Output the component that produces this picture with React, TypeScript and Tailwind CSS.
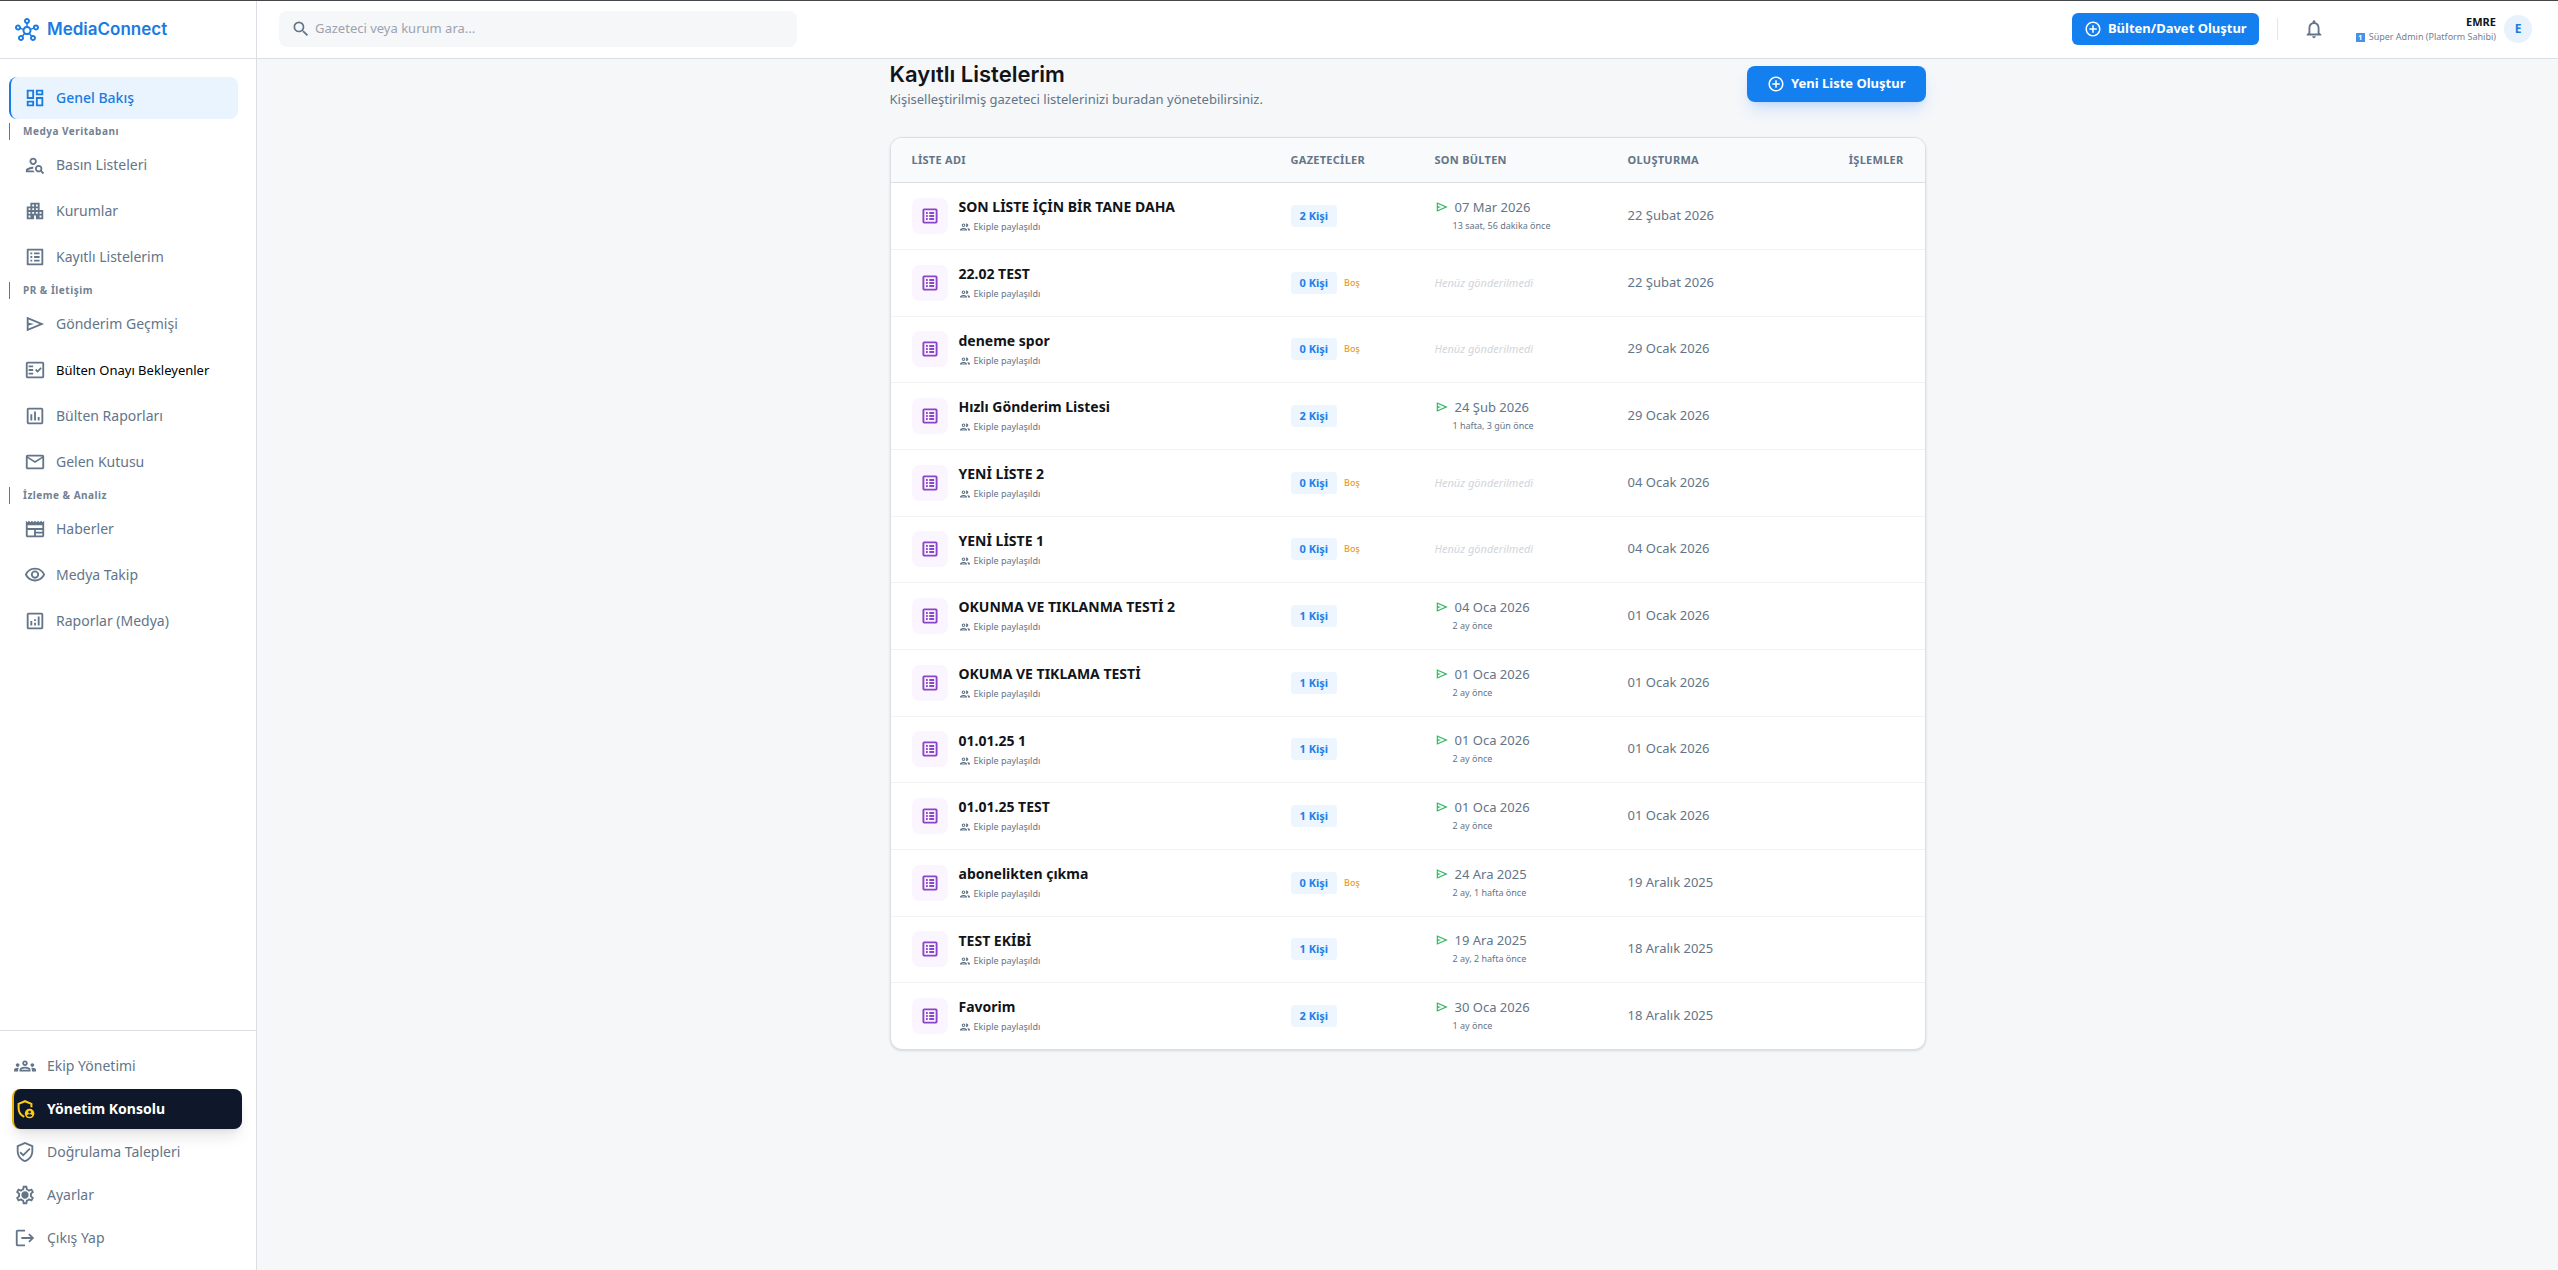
import type { ReactNode } from "react";
import type { IconType } from "react-icons";
import {
    MdAddCircleOutline,
    MdLogout,
    MdOutlineAnalytics,
    MdOutlineApartment,
    MdOutlineDashboard,
    MdOutlineFactCheck,
    MdOutlineGroup,
    MdOutlineGroups,
    MdOutlineHub,
    MdOutlineInsertChart,
    MdOutlineListAlt,
    MdOutlineMail,
    MdOutlineNewspaper,
    MdOutlineNotifications,
    MdOutlinePersonSearch,
    MdOutlineSettings,
    MdOutlineVerifiedUser,
    MdOutlineVisibility,
    MdSearch,
} from "react-icons/md";

type IconProps = { className?: string };

type NavItem = {
    label: string;
    icon: IconType | ((props: IconProps) => ReactNode);
    active?: boolean;
    strong?: boolean;
};

type ListRow = {
    name: string;
    count: number;
    sent?: string;
    ago?: string;
    created: string;
};

function SendIcon({ className }: IconProps) {
    return (
        <svg viewBox="0 -960 960 960" fill="currentColor" className={className} aria-hidden="true">
            <path d="M120-160v-640l760 320-760 320Zm80-120 474-200-474-200v140l240 60-240 60v140Z" />
        </svg>
    );
}

// shield with a solid person badge, the badge is cut out in the button's navy
function ConsoleIcon({ className }: IconProps) {
    return (
        <svg viewBox="0 0 24 24" fill="none" className={className} aria-hidden="true">
            <path
                d="M19 10V6.4l-7-2.9-7 2.9V11c0 4.4 2.6 8 6.2 9.6"
                stroke="currentColor"
                strokeWidth="2.2"
            />
            <circle cx="17" cy="17" r="5.2" fill="currentColor" />
            <circle cx="17" cy="15.4" r="1.5" fill="#0f172a" />
            <path d="M14 19.1c.6-1 1.700-1.500 3-1.500s2.400.5 3 1.500c-.7.900-1.800 1.400-3 1.400s-2.300-.5-3-1.400Z" fill="#0f172a" />
        </svg>
    );
}

function SettingsIcon({ className }: IconProps) {
    return (
        <svg viewBox="0 0 24 24" fill="currentColor" className={className} aria-hidden="true">
            <MdOutlineSettings size={24} />
            <circle cx="12" cy="12" r="3" />
        </svg>
    );
}

// heavier list glyph used in the row tiles
function ListTileIcon({ className }: IconProps) {
    return (
        <svg viewBox="0 0 24 24" fill="none" stroke="currentColor" strokeWidth="2.5" className={className} aria-hidden="true">
            <rect x="3.200" y="3.200" width="17.600" height="17.600" rx="1" />
            <path d="M6.700 8h2.300M6.700 12h2.300M6.700 16h2.300M11 8h6.500M11 12h6.500M11 16h6.500" />
        </svg>
    );
}

const SECTIONS: { title?: string; items: NavItem[] }[] = [
    { items: [{ label: "Genel Bakış", icon: MdOutlineDashboard, active: true }] },
    {
        title: "Medya Veritabanı",
        items: [
            { label: "Basın Listeleri", icon: MdOutlinePersonSearch },
            { label: "Kurumlar", icon: MdOutlineApartment },
            { label: "Kayıtlı Listelerim", icon: MdOutlineListAlt },
        ],
    },
    {
        title: "PR & İletişim",
        items: [
            { label: "Gönderim Geçmişi", icon: SendIcon },
            { label: "Bülten Onayı Bekleyenler", icon: MdOutlineFactCheck, strong: true },
            { label: "Bülten Raporları", icon: MdOutlineInsertChart },
            { label: "Gelen Kutusu", icon: MdOutlineMail },
        ],
    },
    {
        title: "İzleme & Analiz",
        items: [
            { label: "Haberler", icon: MdOutlineNewspaper },
            { label: "Medya Takip", icon: MdOutlineVisibility },
            { label: "Raporlar (Medya)", icon: MdOutlineAnalytics },
        ],
    },
];

const FOOTER_ITEMS: NavItem[] = [
    { label: "Ekip Yönetimi", icon: MdOutlineGroups },
    { label: "Yönetim Konsolu", icon: ConsoleIcon, active: true },
    { label: "Doğrulama Talepleri", icon: MdOutlineVerifiedUser },
    { label: "Ayarlar", icon: SettingsIcon },
    { label: "Çıkış Yap", icon: MdLogout },
];

const ROWS: ListRow[] = [
    { name: "SON LİSTE İÇİN BİR TANE DAHA", count: 2, sent: "07 Mar 2026", ago: "13 saat, 56 dakika önce", created: "22 Şubat 2026" },
    { name: "22.02 TEST", count: 0, created: "22 Şubat 2026" },
    { name: "deneme spor", count: 0, created: "29 Ocak 2026" },
    { name: "Hızlı Gönderim Listesi", count: 2, sent: "24 Şub 2026", ago: "1 hafta, 3 gün önce", created: "29 Ocak 2026" },
    { name: "YENİ LİSTE 2", count: 0, created: "04 Ocak 2026" },
    { name: "YENİ LİSTE 1", count: 0, created: "04 Ocak 2026" },
    { name: "OKUNMA VE TIKLANMA TESTİ 2", count: 1, sent: "04 Oca 2026", ago: "2 ay önce", created: "01 Ocak 2026" },
    { name: "OKUMA VE TIKLAMA TESTİ", count: 1, sent: "01 Oca 2026", ago: "2 ay önce", created: "01 Ocak 2026" },
    { name: "01.01.25 1", count: 1, sent: "01 Oca 2026", ago: "2 ay önce", created: "01 Ocak 2026" },
    { name: "01.01.25 TEST", count: 1, sent: "01 Oca 2026", ago: "2 ay önce", created: "01 Ocak 2026" },
    { name: "abonelikten çıkma", count: 0, sent: "24 Ara 2025", ago: "2 ay, 1 hafta önce", created: "19 Aralık 2025" },
    { name: "TEST EKİBİ", count: 1, sent: "19 Ara 2025", ago: "2 ay, 2 hafta önce", created: "18 Aralık 2025" },
    { name: "Favorim", count: 2, sent: "30 Oca 2026", ago: "1 ay önce", created: "18 Aralık 2025" },
];

function Sidebar() {
    return (
        <aside className="flex w-[257px] shrink-0 flex-col border-r border-[#dbdfe4] bg-white">
            <a href="#" className="flex h-[58px] shrink-0 items-center gap-2 border-b border-[#dbdfe4] px-[15px] text-[#1a7be0]">
                <MdOutlineHub className="size-6" />
                <span className="font-['Inter',sans-serif] text-[17px] font-semibold">MediaConnect</span>
            </a>

            <nav className="flex flex-1 flex-col gap-1 pt-[18px] pr-[18px] pl-[9px]">
                {SECTIONS.map((section, i) => (
                    <div key={i} className="flex flex-col gap-1">
                        {section.title && (
                            <h3 className="h-[17px] border-l border-[#3b82c4] pl-[13px] text-[10px] leading-4 font-bold tracking-wider text-[#738192]">
                                {section.title}
                            </h3>
                        )}
                        {section.items.map((item) => (
                            <a
                                key={item.label}
                                href="#"
                                className={
                                    item.active
                                        ? "flex h-[42px] items-center gap-[10px] rounded-lg border-l-2 border-[#1a7be0] bg-[#eaf4fe] pl-[13px] text-sm font-medium text-[#1a7be0]"
                                        : "flex h-[42px] items-center gap-[10px] rounded-lg border-l-2 border-transparent pl-[13px] text-sm text-[#637588]"
                                }
                            >
                                <item.icon className="size-[22px] shrink-0" />
                                <span className={item.strong ? "text-[13px] text-black" : ""}>{item.label}</span>
                            </a>
                        ))}
                    </div>
                ))}
            </nav>

            <div className="flex flex-col gap-[3px] border-t border-[#dbdfe4] pt-[15px] pr-[14px] pb-3 pl-3">
                {FOOTER_ITEMS.map((item) => (
                    <a
                        key={item.label}
                        href="#"
                        className={
                            item.active
                                ? "flex h-10 items-center gap-[11px] rounded-lg border-l-2 border-[#eab308] bg-[#0f172a] text-sm font-bold text-white shadow-lg"
                                : "flex h-10 items-center gap-[11px] border-l-2 border-transparent text-sm text-[#637588]"
                        }
                    >
                        <item.icon className={item.active ? "size-[22px] text-[#facc15]" : "size-[22px]"} />
                        {item.label}
                    </a>
                ))}
            </div>
        </aside>
    );
}

function Topbar() {
    return (
        <header className="flex h-[58px] shrink-0 items-center border-b border-[#dbdfe4] bg-white pr-[26px] pb-px pl-[22px]">
            <label className="flex h-9 w-[518px] items-center gap-1 rounded-lg bg-[#f5f7f9] px-3 text-[#637588]">
                <MdSearch className="size-5 shrink-0" aria-label="Ara" />
                <input
                    type="search"
                    placeholder="Gazeteci veya kurum ara..."
                    className="w-full bg-transparent text-[13px] outline-none placeholder:text-[#9ca3af]"
                />
            </label>

            <div className="ml-auto flex items-center">
                <button className="flex h-8 items-center gap-[6px] rounded-md bg-[#147fee] px-3 text-[13px] font-bold text-white">
                    <MdAddCircleOutline className="size-[18px]" />
                    Bülten/Davet Oluştur
                </button>
                <span className="mx-[18px] h-[22px] w-px bg-[#e3e6ea]" />
                <button className="flex w-9 justify-center text-[#637588]" aria-label="Bildirimler">
                    <MdOutlineNotifications className="size-[22px]" />
                </button>
                <div className="ml-6 flex flex-col items-end">
                    <span className="text-[11px] leading-4 font-bold text-[#111418]">EMRE</span>
                    <span className="flex items-center gap-1 text-[9px] leading-[14px] text-[#738192]">
                        <span className="flex size-[9px] items-center justify-center bg-[#4a90e8] text-[7px] leading-none font-bold text-white">
                            1
                        </span>
                        Süper Admin (Platform Sahibi)
                    </span>
                </div>
                <span className="ml-2 flex size-7 items-center justify-center rounded-full bg-[#e7f2fd] text-xs font-bold text-[#1a7be0]">
                    E
                </span>
            </div>
        </header>
    );
}

function ListTable() {
    return (
        <div className="overflow-hidden rounded-xl border border-[#dbdfe4] bg-white shadow-sm">
            <table className="w-full table-fixed text-left">
                <colgroup>
                    <col className="w-[379px]" />
                    <col className="w-[144px]" />
                    <col className="w-[193px]" />
                    <col />
                    <col />
                </colgroup>
                <thead className="bg-[#f9fafc] text-[11px] tracking-wide text-[#637588]">
                    <tr className="h-11 border-b border-[#dbdfe4]">
                        <th className="px-[21px] font-bold">LİSTE ADI</th>
                        <th className="px-[21px] font-bold">GAZETECİLER</th>
                        <th className="px-[21px] font-bold">SON BÜLTEN</th>
                        <th className="px-[21px] font-bold">OLUŞTURMA</th>
                        <th className="px-[21px] text-right font-bold">İŞLEMLER</th>
                    </tr>
                </thead>
                <tbody className="text-[13px] text-[#637588]">
                    {ROWS.map((row) => (
                        <tr key={row.name} className="h-[67px] border-b border-[#f0f2f4] last:border-b-0 nth-[3n]:h-[66px]">
                            <td className="px-[21px]">
                                <div className="flex items-center gap-[11px]">
                                    <span className="flex size-9 shrink-0 items-center justify-center rounded-lg bg-[#faf5ff] text-[#8b45c9]">
                                        <ListTileIcon className="size-[18px]" />
                                    </span>
                                    <div>
                                        <p className="text-sm leading-5 font-bold text-[#111418]">{row.name}</p>
                                        <p className="mt-[3px] flex items-center gap-[3px] text-[9px] leading-[14px]">
                                            <MdOutlineGroup className="size-3" />
                                            Ekiple paylaşıldı
                                        </p>
                                    </div>
                                </div>
                            </td>
                            <td className="px-[21px]">
                                <div className="flex items-center gap-[7px]">
                                    <span className="rounded-sm bg-[#edf5fe] px-[9px] text-[11px] leading-[22px] font-bold text-[#1f80e6]">
                                        {row.count} Kişi
                                    </span>
                                    {row.count === 0 && <span className="text-[9px] font-medium text-[#eb9a2b]">Boş</span>}
                                </div>
                            </td>
                            <td className="px-[21px]">
                                {row.sent ? (
                                    <div>
                                        <p className="flex items-center gap-[6px] leading-[18px]">
                                            <SendIcon className="size-[14px] text-[#33b864]" />
                                            {row.sent}
                                        </p>
                                        <p className="mt-px pl-[18px] text-[9px] leading-[17px]">{row.ago}</p>
                                    </div>
                                ) : (
                                    <em className="text-[11px] text-[#d1d5db]">Henüz gönderilmedi</em>
                                )}
                            </td>
                            <td className="px-[21px]">{row.created}</td>
                            <td />
                        </tr>
                    ))}
                </tbody>
            </table>
        </div>
    );
}

export default function App() {
    return (
        <div className="flex min-h-screen border-t border-[#45464a] bg-[#f5f7f9] font-['Noto_Sans',sans-serif]">
            <Sidebar />
            <div className="flex min-w-0 flex-1 flex-col">
                <Topbar />
                <main className="mx-auto w-full max-w-[1036px] pb-10">
                    <div className="mb-7 flex items-start justify-between pt-[7px]">
                        <div>
                            <h1 className="font-['Inter',sans-serif] text-[22px] leading-4 font-semibold text-[#111418]">Kayıtlı Listelerim</h1>
                            <p className="mt-[7px] text-[13px] leading-5 text-[#637588]">
                                Kişiselleştirilmiş gazeteci listelerinizi buradan yönetebilirsiniz.
                            </p>
                        </div>
                        <button className="flex h-9 items-center gap-[6px] rounded-lg bg-[#147fee] px-5 text-[13px] font-bold text-white shadow-lg shadow-blue-500/20">
                            <MdAddCircleOutline className="size-[18px]" />
                            Yeni Liste Oluştur
                        </button>
                    </div>
                    <ListTable />
                </main>
            </div>
        </div>
    );
}
